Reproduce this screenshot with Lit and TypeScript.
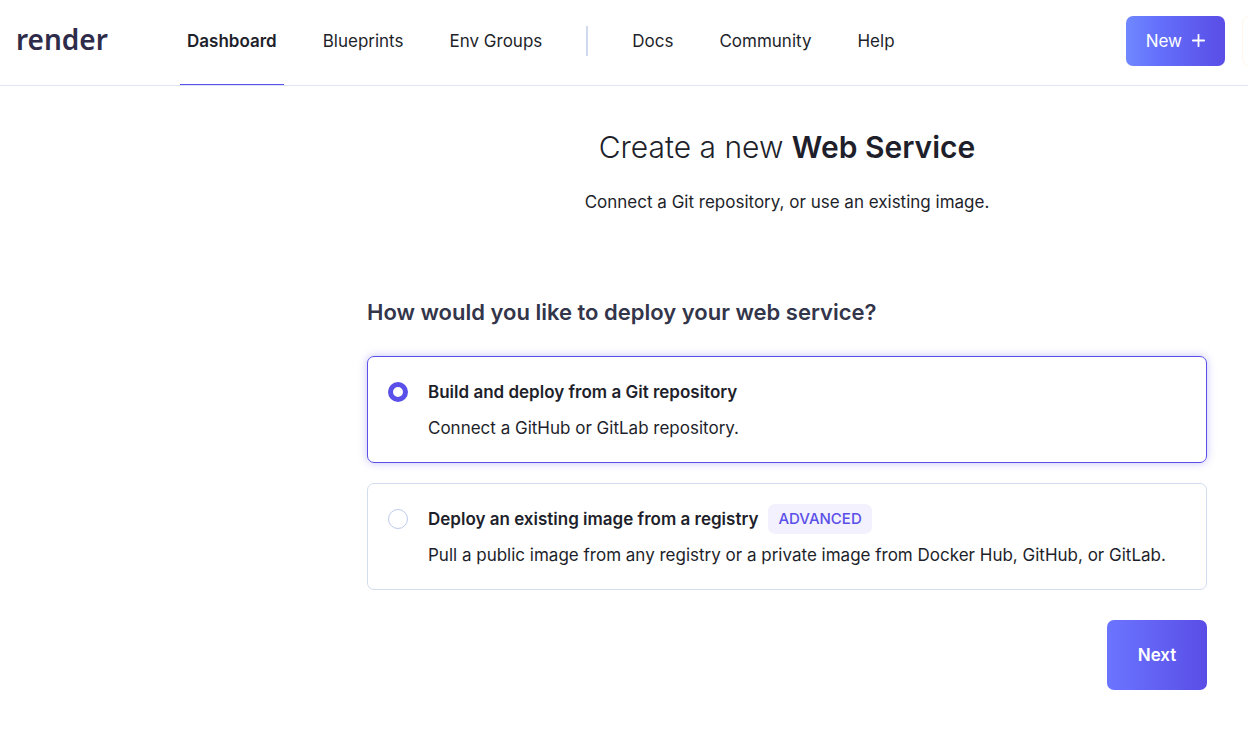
import { LitElement, html, css, svg } from "lit";
import { customElement, state } from "lit/decorators.js";
import { classMap } from "lit/directives/class-map.js";

interface DeployOption {
  id: string;
  title: string;
  description: string;
  badge?: string;
}

const OPTIONS: DeployOption[] = [
  {
    id: "git",
    title: "Build and deploy from a Git repository",
    description: "Connect a GitHub or GitLab repository.",
  },
  {
    id: "image",
    title: "Deploy an existing image from a registry",
    description:
      "Pull a public image from any registry or a private image from Docker Hub, GitHub, or GitLab.",
    badge: "ADVANCED",
  },
];

@customElement("top-bar")
export class TopBar extends LitElement {
  static styles = css`
    :host {
      display: block;
    }
    .bar {
      display: flex;
      align-items: center;
      height: 85px;
      padding-left: 16px;
      border-bottom: 1px solid #dde5f4;
      overflow: hidden;
    }
    .logo {
      width: 164px;
      flex: none;
      margin-bottom: 8px;
      font: 600 28px/40px "Noto Sans", "Open Sans", sans-serif;
      color: #2e2c4a;
      text-decoration: none;
    }
    .nav {
      display: flex;
      align-items: stretch;
      align-self: stretch;
      gap: 32px;
      flex: 1;
    }
    .link {
      display: block;
      padding: 26px 7px 0;
      line-height: 30px;
      color: #1e1f2b;
      text-decoration: none;
      white-space: nowrap;
      border-bottom: 1px solid transparent;
    }
    .active {
      font-weight: 600;
      border-bottom-color: #5a4fe8;
    }
    .divider {
      width: 2px;
      height: 30px;
      margin: 26px 5px 0;
      background: #cfdaef;
    }
    .actions {
      display: flex;
      flex: none;
      gap: 17px;
      margin: 0 -44px 4px 0;
    }
    .new {
      display: flex;
      align-items: center;
      gap: 10px;
      height: 50px;
      padding: 0 20px;
      border: 0;
      border-radius: 7px;
      background: linear-gradient(90deg, #7088ff, #6470fb 32%, #5a4de6);
      color: #fff;
      font: inherit;
    }
    .account {
      width: 50px;
      height: 50px;
      padding: 0;
      border: 1px solid #fff6ec;
      border-radius: 7px;
      background: #fff;
    }
  `;

  render() {
    return html`
      <header class="bar">
        <a class="logo" href="#">render</a>
        <nav class="nav">
          <a class="link active" href="#">Dashboard</a>
          <a class="link" href="#">Blueprints</a>
          <a class="link" href="#">Env Groups</a>
          <span class="divider"></span>
          <a class="link" href="#">Docs</a>
          <a class="link" href="#">Community</a>
          <a class="link" href="#">Help</a>
        </nav>
        <div class="actions">
          <button class="new" type="button">
            New
            <svg width="13" height="13" viewBox="0 0 13 13" aria-hidden="true">
              ${svg`<path d="M6.5 0.8v11.4M0.8 6.5h11.4" stroke="#fff" stroke-width="1.8" stroke-linecap="round" />`}
            </svg>
          </button>
          <button class="account" type="button" aria-label="Account"></button>
        </div>
      </header>
    `;
  }
}

@customElement("app-root")
export class AppRoot extends LitElement {
  static styles = css`
    :host {
      display: block;
      min-height: 100vh;
      background: #fff;
      color: #1e1f2b;
      font: 400 17px/30px Inter, Roboto, sans-serif;
    }
    .main {
      padding: 41px 41px 47px 367px;
    }
    .title {
      margin: 0;
      text-align: center;
      font-size: 30px;
      line-height: 40px;
      font-weight: 300;
    }
    .title strong {
      font-weight: 600;
    }
    .lead {
      margin: 20px 0 0;
      text-align: center;
    }
    .question {
      margin: 80px 0 0;
      font-size: 22px;
      line-height: 30px;
      font-weight: 600;
      color: #33354a;
    }
    .form {
      display: flex;
      flex-direction: column;
    }
    .options {
      display: grid;
      gap: 20px;
      margin: 29px 0 0;
      padding: 0;
      border: 0;
    }
    .card {
      display: flex;
      gap: 20px;
      padding: 20px 20px 19px;
      border: 1px solid #d2dcef;
      border-radius: 7px;
    }
    .card.selected {
      border-color: #5a4fe8;
      box-shadow: 0 0 8px rgba(90, 79, 232, 0.35);
    }
    .radio {
      appearance: none;
      flex: none;
      width: 20px;
      height: 20px;
      margin: 5px 0 0;
      border: 1px solid #bccaea;
      border-radius: 50%;
      background: #fff;
    }
    .radio:checked {
      border: 5px solid #5a4fe8;
    }
    .text {
      display: grid;
      gap: 6px;
    }
    .name {
      display: flex;
      gap: 10px;
      font-weight: 600;
      line-height: 30px;
    }
    .badge {
      padding: 0 10px;
      border-radius: 7px;
      background: #f2f1fd;
      color: #5a4fe8;
      font-size: 15px;
      font-weight: 500;
    }
    .next {
      align-self: flex-end;
      width: 100px;
      height: 70px;
      margin-top: 30px;
      border: 0;
      border-radius: 7px;
      background: linear-gradient(90deg, #6b75ff, #5a4de6);
      color: #fff;
      font: inherit;
      font-weight: 600;
    }
  `;

  @state() private selected = "git";

  private renderOption(option: DeployOption) {
    const checked = this.selected === option.id;
    return html`
      <label class=${classMap({ card: true, selected: checked })}>
        <input
          class="radio"
          type="radio"
          name="source"
          .checked=${checked}
          @change=${() => (this.selected = option.id)}
        />
        <span class="text">
          <span class="name">
            <span>${option.title}</span>
            ${option.badge ? html`<span class="badge">${option.badge}</span>` : ""}
          </span>
          <span>${option.description}</span>
        </span>
      </label>
    `;
  }

  render() {
    return html`
      <top-bar></top-bar>
      <main class="main">
        <h1 class="title">Create a new <strong>Web Service</strong></h1>
        <p class="lead">Connect a Git repository, or use an existing image.</p>
        <form class="form" @submit=${(e: Event) => e.preventDefault()}>
          <h2 class="question" id="question">How would you like to deploy your web service?</h2>
          <fieldset class="options" aria-labelledby="question">
            ${OPTIONS.map((option) => this.renderOption(option))}
          </fieldset>
          <button class="next" type="submit">Next</button>
        </form>
      </main>
    `;
  }
}
